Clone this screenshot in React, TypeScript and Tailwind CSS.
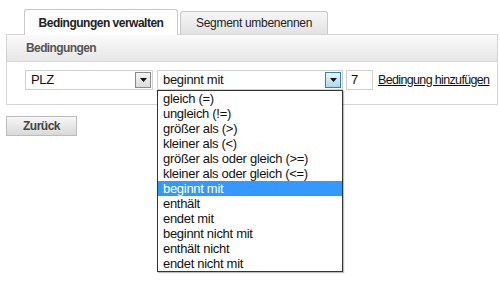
import React from "react";

const options = [
  "gleich (=)",
  "ungleich (!=)",
  "größer als (>)",
  "kleiner als (<)",
  "größer als oder gleich (>=)",
  "kleiner als oder gleich (<=)",
  "beginnt mit",
  "enthält",
  "endet mit",
  "beginnt nicht mit",
  "enthält nicht",
  "endet nicht mit",
];

function Arrow() {
  return (
    <svg width="7" height="4" viewBox="0 0 7 4">
      <path d="M0 0h7L3.5 4z" fill="#111" />
    </svg>
  );
}

export default function App() {
  return (
    <div
      className="relative w-[500px] h-[283px] bg-white text-[13px] tracking-[-0.3px] text-[#111]"
      style={{ fontFamily: '"Liberation Sans", Arial, sans-serif' }}
    >
      {/* Tabs */}
      <div className="flex items-end gap-[2px] pl-[24px] pt-[9px]">
        <div className="relative z-10 -mb-px flex h-[26px] w-[154px] items-center justify-center rounded-t-[3px] border border-b-0 border-[#c8c8c8] bg-white text-[12px] font-bold tracking-[-0.5px] text-[#222]">
          Bedingungen verwalten
        </div>
        <div className="flex h-[23px] w-[148px] items-center justify-center rounded-t-[3px] border border-b-0 border-[#c8c8c8] bg-gradient-to-b from-[#f6f6f6] to-[#e2e2e2] text-[12px] tracking-[-0.3px] text-[#222]">
          Segment umbenennen
        </div>
      </div>
      {/* Panel */}
      <div className="ml-[6px] w-[492px] border border-[#d4d4d4]">
        <div className="flex h-[27px] items-center border-b border-[#d8d8d8] bg-gradient-to-b from-[#fbfbfb] to-[#e6e6e6] pl-[19px] text-[12px] font-bold tracking-[-0.6px] text-[#555]">
          Bedingungen
        </div>
        <div className="flex h-[42px] items-start pl-[18px] pt-[8px]">
          <div className="flex h-[20px] w-[128px] items-center justify-between border border-[#d0d0d0] bg-white pl-[5px] pr-[1px]">
            <span>PLZ</span>
            <div className="flex h-[16px] w-[16px] items-center justify-center border border-[#8a8a8a] bg-gradient-to-b from-[#f4f4f4] to-[#dcdcdc]">
              <Arrow />
            </div>
          </div>
          <div className="ml-[4px] flex h-[20px] w-[186px] items-center justify-between border border-[#d0d0d0] bg-white pl-[5px] pr-[1px]">
            <span>beginnt mit</span>
            <div className="flex h-[16px] w-[16px] items-center justify-center border border-[#3c7fb1] bg-gradient-to-b from-[#eaf6fd] to-[#a7d9f5]">
              <Arrow />
            </div>
          </div>
          <div className="ml-[3px] flex h-[20px] w-[27px] items-center border border-[#d0d0d0] bg-white pl-[4px]">
            7
          </div>
          <a className="ml-[5px] flex h-[20px] items-center whitespace-nowrap text-[12.5px] tracking-[-0.65px] text-[#111] underline">
            Bedingung hinzufügen
          </a>
        </div>
      </div>
      {/* Back button */}
      <div className="ml-[6px] mt-[11px]">
        <button className="flex h-[20px] w-[71px] items-center justify-center border border-[#bcbcbc] bg-gradient-to-b from-[#f7f7f7] to-[#d9d9d9] text-[12px] font-bold tracking-[-0.5px] text-[#444]">
          Zurück
        </button>
      </div>
      {/* Dropdown list */}
      <div className="absolute left-[157px] top-[90px] w-[186px] border border-[#333] bg-white shadow-[1px_1px_1px_rgba(0,0,0,0.25)]">
        {options.map((o) => (
          <div
            key={o}
            className={
              "h-[15px] pl-[5px] leading-[15px] " +
              (o === "beginnt mit" ? "bg-[#3399ff] text-white" : "text-[#111]")
            }
          >
            {o}
          </div>
        ))}
      </div>
    </div>
  );
}
